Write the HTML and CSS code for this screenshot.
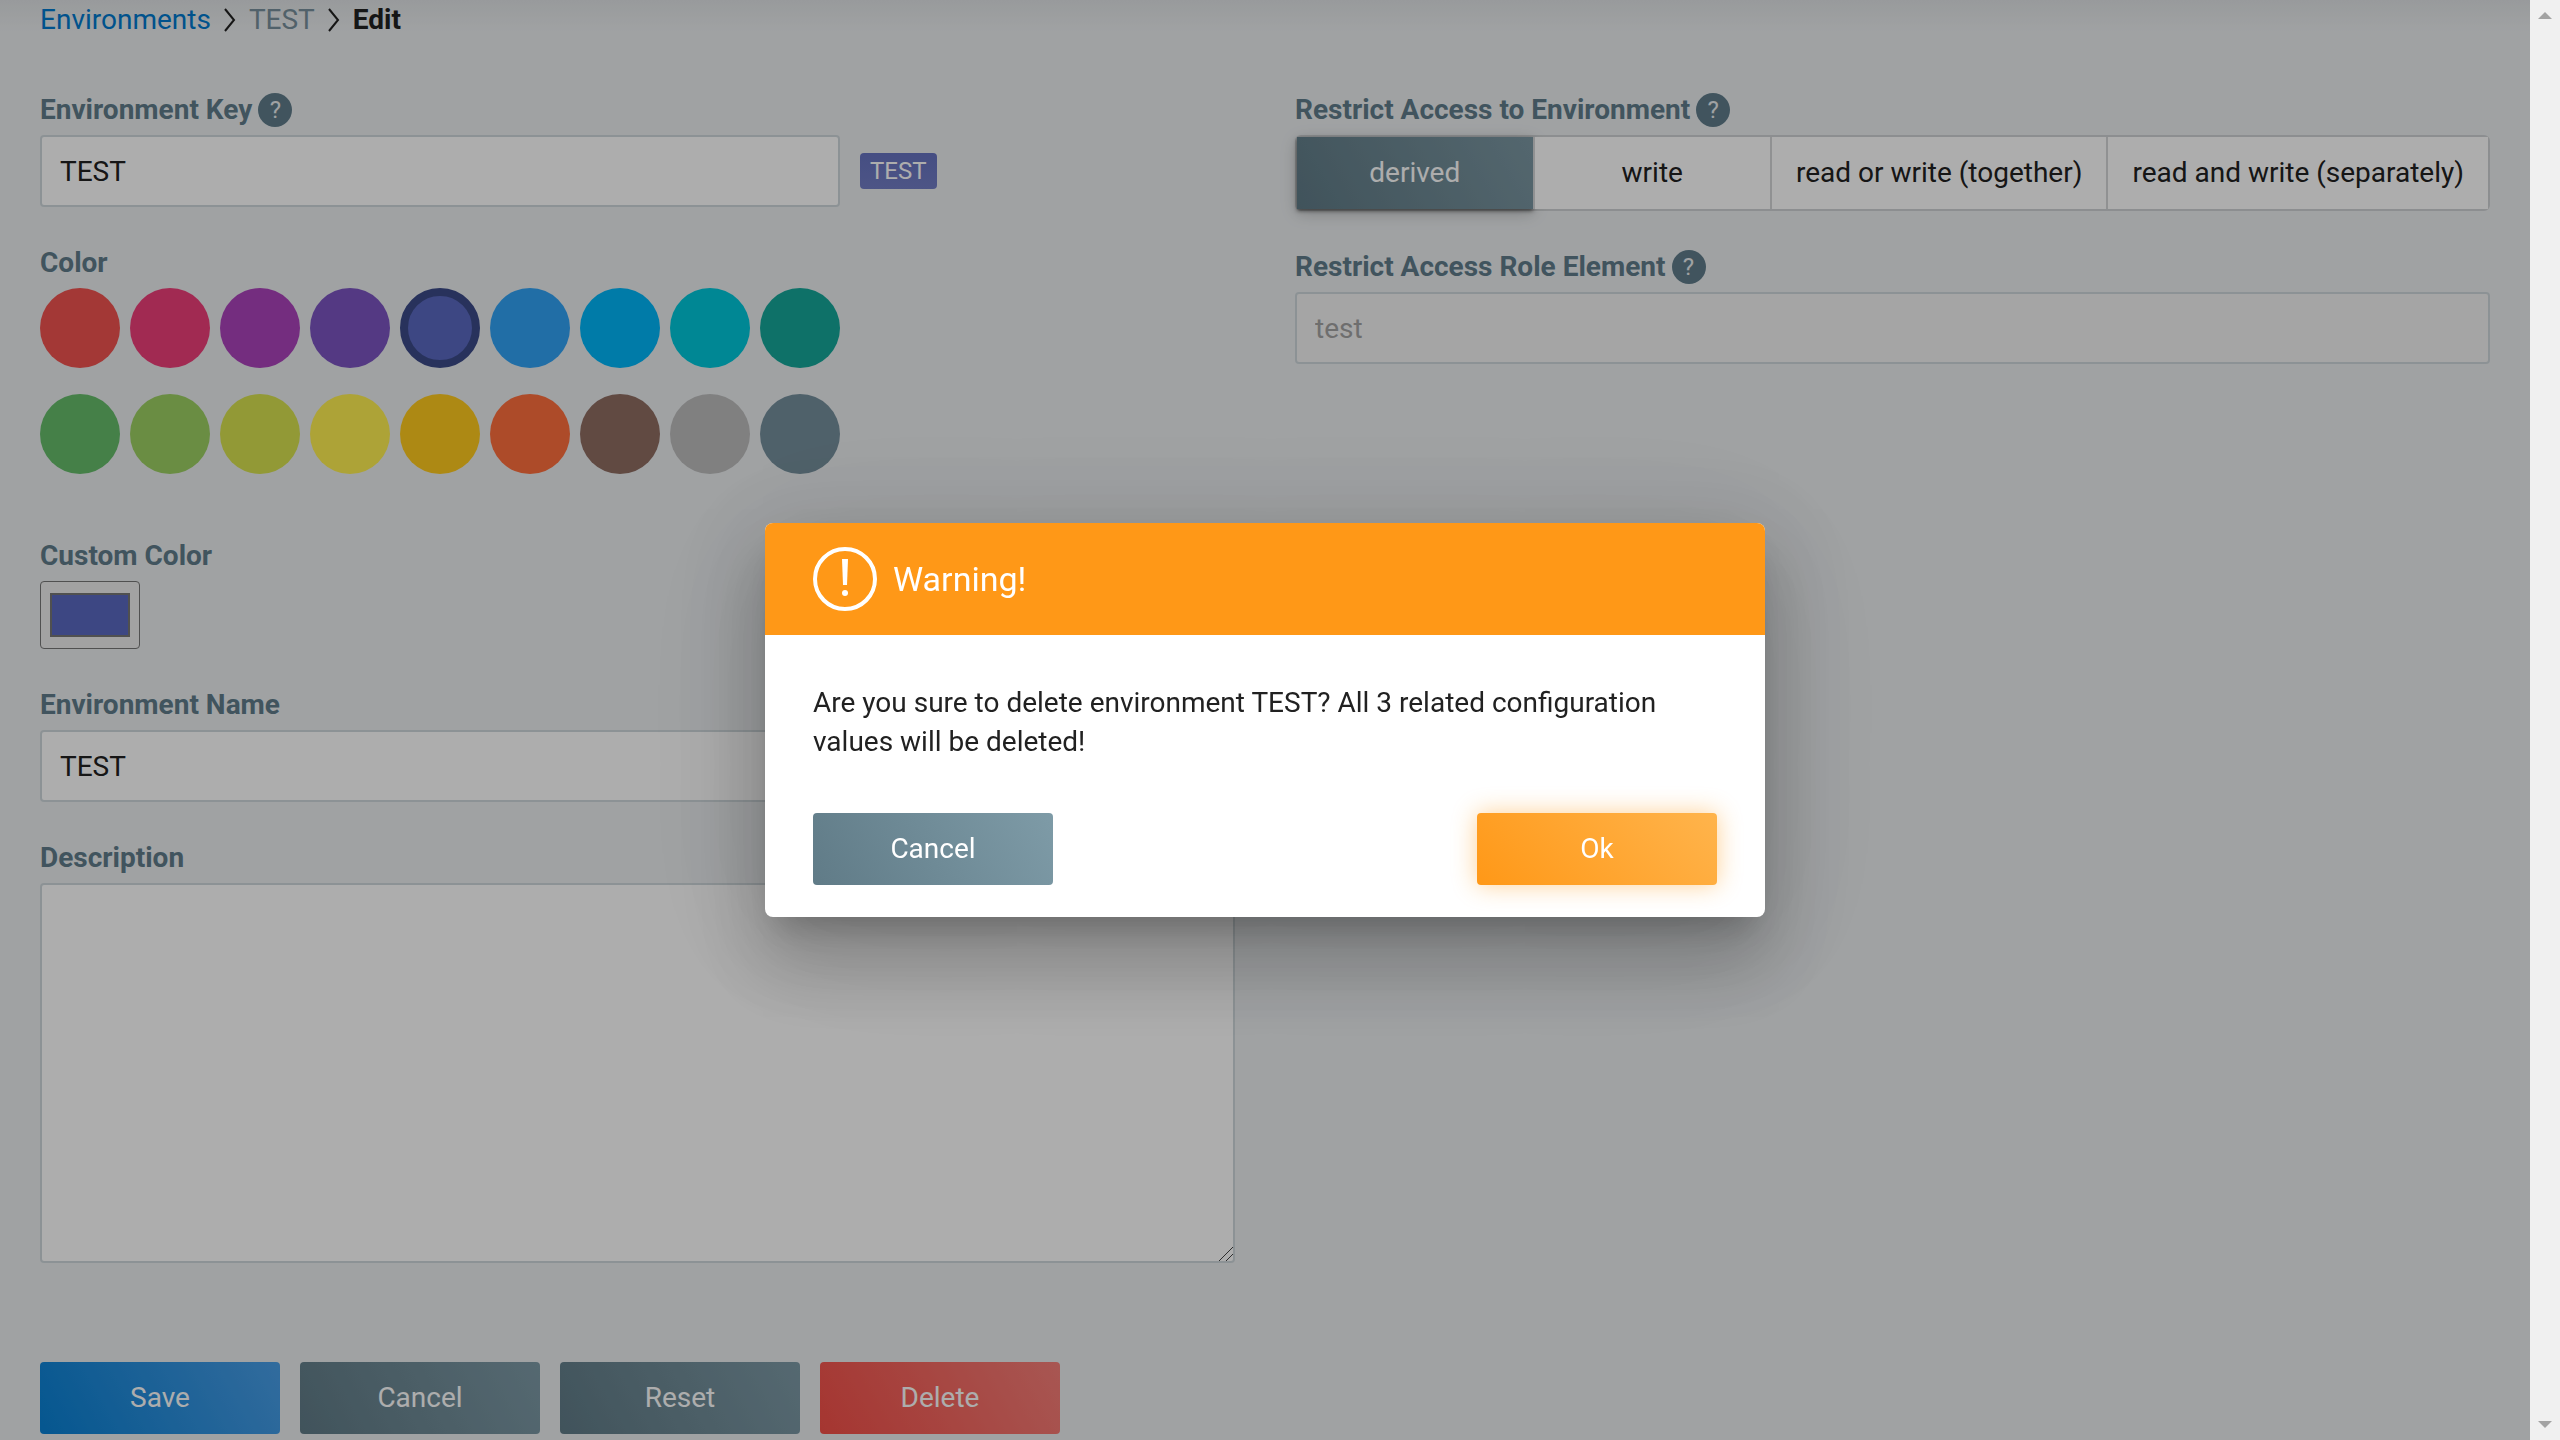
FILE: index.html
```
<!DOCTYPE html>
<html lang="en">
<head>
<meta charset="utf-8">
<title>Edit environment</title>
<link rel="stylesheet" href="styles.css">
</head>
<body>
<div class="app">
  <main class="page">
    <nav class="breadcrumb" aria-label="Breadcrumb">
      <a class="crumb-link" href="#environments">Environments</a>
      <svg class="chevron" viewBox="0 0 12 24" aria-hidden="true"><path d="M1 1 L10 12 L1 23"/></svg>
      <span class="crumb-muted">TEST</span>
      <svg class="chevron" viewBox="0 0 12 24" aria-hidden="true"><path d="M1 1 L10 12 L1 23"/></svg>
      <span class="crumb-current">Edit</span>
    </nav>

    <form class="form">
      <div class="column">
        <div class="field">
          <div class="label-row"><label for="env-key">Environment Key</label><button type="button" class="help" aria-label="Help">?</button></div>
          <div class="key-row">
            <input class="text-input key-input" id="env-key" type="text" value="TEST">
            <span class="tag">TEST</span>
          </div>
        </div>

        <div class="field swatch-field">
          <div class="label-row" id="color-label">Color</div>
          <div class="swatches" role="radiogroup" aria-labelledby="color-label">
            <input type="radio" name="color" class="swatch c-red" aria-label="Red">
            <input type="radio" name="color" class="swatch c-pink" aria-label="Pink">
            <input type="radio" name="color" class="swatch c-purple" aria-label="Purple">
            <input type="radio" name="color" class="swatch c-violet" aria-label="Violet">
            <input type="radio" name="color" class="swatch c-indigo" aria-label="Indigo" checked>
            <input type="radio" name="color" class="swatch c-blue" aria-label="Blue">
            <input type="radio" name="color" class="swatch c-sky" aria-label="Light blue">
            <input type="radio" name="color" class="swatch c-cyan" aria-label="Cyan">
            <input type="radio" name="color" class="swatch c-teal" aria-label="Teal">
            <input type="radio" name="color" class="swatch c-green" aria-label="Green">
            <input type="radio" name="color" class="swatch c-light-green" aria-label="Light green">
            <input type="radio" name="color" class="swatch c-lime" aria-label="Lime">
            <input type="radio" name="color" class="swatch c-yellow" aria-label="Yellow">
            <input type="radio" name="color" class="swatch c-amber" aria-label="Amber">
            <input type="radio" name="color" class="swatch c-orange" aria-label="Orange">
            <input type="radio" name="color" class="swatch c-brown" aria-label="Brown">
            <input type="radio" name="color" class="swatch c-grey" aria-label="Grey">
            <input type="radio" name="color" class="swatch c-blue-grey" aria-label="Blue grey">
          </div>
        </div>

        <div class="field">
          <div class="label-row"><label for="custom-color">Custom Color</label></div>
          <input class="color-input" id="custom-color" type="color" value="#5a69c1">
        </div>

        <div class="field">
          <div class="label-row"><label for="env-name">Environment Name</label></div>
          <input class="text-input" id="env-name" type="text" value="TEST">
        </div>

        <div class="field">
          <div class="label-row"><label for="description">Description</label></div>
          <textarea class="text-input text-area" id="description"></textarea>
        </div>
      </div>

      <div class="column">
        <div class="field">
          <div class="label-row"><span id="access-label">Restrict Access to Environment</span><button type="button" class="help" aria-label="Help">?</button></div>
          <div class="toggle" role="group" aria-labelledby="access-label">
            <button type="button" class="option option-even selected" aria-pressed="true">derived</button>
            <button type="button" class="option option-even">write</button>
            <button type="button" class="option">read or write (together)</button>
            <button type="button" class="option">read and write (separately)</button>
          </div>
        </div>
        <div class="field">
          <div class="label-row"><label for="role-element">Restrict Access Role Element</label><button type="button" class="help" aria-label="Help">?</button></div>
          <input class="text-input" id="role-element" type="text" value="test" disabled>
        </div>
      </div>

      <div class="actions">
        <button type="button" class="button primary">Save</button>
        <button type="button" class="button secondary">Cancel</button>
        <button type="button" class="button secondary">Reset</button>
        <button type="button" class="button danger">Delete</button>
      </div>
    </form>

    <div class="backdrop">
      <section class="modal" role="alertdialog" aria-modal="true" aria-labelledby="modal-title">
        <header class="modal-header">
          <svg class="warning-icon" viewBox="0 0 64 64" aria-hidden="true">
            <circle cx="32" cy="32" r="30" fill="none" stroke="#fff" stroke-width="4"/>
            <path d="M29 12h6l-1 26h-4z" fill="#fff"/>
            <circle cx="32" cy="46" r="3" fill="#fff"/>
          </svg>
          <h2 class="modal-title" id="modal-title">Warning!</h2>
        </header>
        <div class="modal-body">
          <p class="modal-text">Are you sure to delete environment TEST? All 3 related configuration values will be deleted!</p>
          <div class="modal-actions">
            <button type="button" class="button secondary">Cancel</button>
            <button type="button" class="button warning">Ok</button>
          </div>
        </div>
      </section>
    </div>
  </main>

  <div class="scrollbar" aria-hidden="true">
    <svg class="arrow" viewBox="0 0 14 7"><path d="M7 0L14 7H0z"/></svg>
    <svg class="arrow" viewBox="0 0 14 7"><path d="M0 0H14L7 7z"/></svg>
  </div>
</div>
</body>
</html>
```
FILE: styles.css
```
*, *::before, *::after { box-sizing: border-box; }

body {
  margin: 0;
  background: #eceff1;
  color: #212121;
  font-family: Roboto, "Liberation Sans", sans-serif;
  font-size: 28px;
  line-height: 40px;
}

button, input, textarea { font: inherit; margin: 0; }

.app {
  display: grid;
  grid-template-columns: minmax(0, 1fr) 30px;
  min-height: 100vh;
}

.page {
  padding: 0 40px 4px;
  background: linear-gradient(#e1e4e6, #eceff1 32px);
}

.breadcrumb {
  display: flex;
  align-items: center;
  gap: 13px;
  height: 40px;
}
.crumb-link { color: #007acf; text-decoration: none; }
.crumb-muted { color: #78909c; }
.crumb-current { font-weight: 700; }
.chevron {
  width: 12px;
  height: 24px;
  fill: none;
  stroke: #212121;
  stroke-width: 2;
}

.form {
  display: grid;
  grid-template-columns: repeat(2, minmax(0, 1fr));
  column-gap: 60px;
  padding-top: 49px;
}
.column {
  display: flex;
  flex-direction: column;
  gap: 35px;
}
.field { display: flex; flex-direction: column; align-items: stretch; }
.swatch-field { padding-bottom: 26px; }

.label-row {
  display: flex;
  align-items: center;
  gap: 6px;
  height: 42px;
  margin-bottom: 4px;
  color: #607d8b;
  font-weight: 700;
}
.help {
  width: 34px;
  height: 34px;
  padding: 0;
  border: 0;
  border-radius: 50%;
  background: #607d8b;
  color: #eceff1;
  font-size: 24px;
  font-weight: 400;
  line-height: 34px;
}

.text-input {
  width: 100%;
  height: 72px;
  padding: 0 18px;
  border: 2px solid #cfd8dc;
  border-radius: 4px;
  background: #fff;
  color: #212121;
}
.text-input:disabled { background: #f4f4f4; color: #a3a3a3; }
.text-area { display: block; height: 380px; padding: 16px 18px; resize: both; }
.text-area::-webkit-scrollbar { width: 16px; height: 16px; }
.text-area::-webkit-resizer {
  background: url("data:image/svg+xml,%3Csvg xmlns='http://www.w3.org/2000/svg' width='16' height='16'%3E%3Cpath d='M1 15L15 1M8 15L15 8' stroke='%23444' fill='none'/%3E%3C/svg%3E") no-repeat;
}

.key-row { display: flex; align-items: center; gap: 20px; }
.key-input { width: 800px; }
.tag {
  height: 36px;
  padding: 0 10px;
  border-radius: 4px;
  background: linear-gradient(#6673c1, #727ec6);
  color: #fff;
  font-size: 24px;
  line-height: 36px;
}

.swatches {
  display: grid;
  grid-template-columns: repeat(9, 80px);
  gap: 26px 10px;
}
.swatch {
  width: 80px;
  height: 80px;
  border-radius: 50%;
  appearance: none;
}
.swatch:checked { border: 8px solid #3c4b88; }
.c-red { background: #f05350; }
.c-pink { background: #ee3f7a; }
.c-purple { background: #ac43bc; }
.c-violet { background: #7c55c2; }
.c-indigo { background: #5a69c1; }
.c-blue { background: #32a3f5; }
.c-sky { background: #00b5f8; }
.c-cyan { background: #00c7da; }
.c-teal { background: #15a79a; }
.c-green { background: #66bd6b; }
.c-light-green { background: #9dd064; }
.c-lime { background: #d7e250; }
.c-yellow { background: #fff052; }
.c-amber { background: #ffcb1e; }
.c-orange { background: #ff6f3d; }
.c-brown { background: #8f6d62; }
.c-grey { background: #bdbdbd; }
.c-blue-grey { background: #758f9c; }

.color-input {
  width: 100px;
  height: 68px;
  padding: 11px 9px;
  border: 1px solid #767676;
  border-radius: 4px;
  background: #efefef;
}
.color-input::-webkit-color-swatch-wrapper { padding: 0; }
.color-input::-webkit-color-swatch { border: 2px solid #777; border-radius: 0; }

.toggle {
  display: flex;
  height: 76px;
  border: 2px solid #cfd2d4;
  border-radius: 6px;
  background: #fff;
}
.option {
  padding: 0 24px;
  border: 0;
  border-left: 2px solid #d4d6d8;
  background: #fff;
  color: #212121;
  white-space: nowrap;
}
.option-even { flex: 1 1 0; }
.option.selected {
  border-left: 0;
  background: linear-gradient(60deg, #607b87, #7c98a3);
  box-shadow: 0 2px 4px rgba(0, 0, 0, .5), 0 4px 16px rgba(0, 0, 0, .2);
  color: #fff;
}

.actions { display: flex; gap: 20px; margin-top: 99px; }
.button {
  width: 240px;
  height: 72px;
  padding: 0;
  border: 0;
  border-radius: 4px;
  color: #fff;
}
.primary { background: linear-gradient(60deg, #0880d4, #4a9fe8); }
.secondary { background: linear-gradient(60deg, #607b87, #7e9ba7); }
.danger { background: linear-gradient(60deg, #f44f48, #f8807a); }
.warning {
  background: linear-gradient(45deg, #ff9817, #ffb44c);
  box-shadow: 0 0 24px rgba(255, 152, 23, .45);
}

.backdrop {
  position: fixed;
  inset: 0 30px 0 0;
  display: flex;
  align-items: center;
  justify-content: center;
  background: rgba(0, 0, 0, .32);
}
.modal {
  width: 1000px;
  overflow: hidden;
  border-radius: 8px;
  background: #fff;
  box-shadow:
    0 22px 30px -14px rgba(0, 0, 0, .2),
    0 48px 76px 6px rgba(0, 0, 0, .14),
    0 18px 92px 16px rgba(0, 0, 0, .12),
    0 20px 160px 20px rgba(0, 0, 0, .06);
}
.modal-header {
  display: flex;
  align-items: center;
  gap: 16px;
  padding: 24px 48px;
  background: #ff9817;
  color: #fff;
}
.warning-icon { width: 64px; height: 64px; }
.modal-title { margin: 0; font-size: 34px; font-weight: 400; }
.modal-body { padding: 48px 48px 32px; }
.modal-text { margin: 0 0 52px; line-height: 39px; }
.modal-actions { display: flex; justify-content: space-between; }

.scrollbar {
  display: flex;
  flex-direction: column;
  align-items: center;
  justify-content: space-between;
  padding: 12px 0;
  background: #f0f0f0;
}
.arrow { width: 14px; height: 7px; fill: #a3a3a3; }
```
